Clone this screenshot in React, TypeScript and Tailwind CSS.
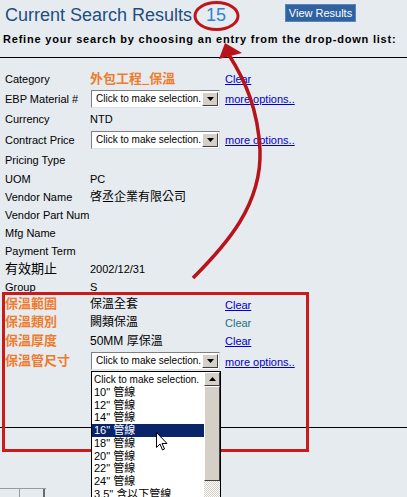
import type { ReactNode } from 'react'

const FONT = "font-['Tahoma','Liberation_Sans','Noto_Sans_CJK_TC',sans-serif]"

type Link = 'clear' | 'clear-visited' | 'more'
type Row = { label: string; cjk?: boolean; value?: ReactNode; select?: boolean; link?: Link; h: string; open?: boolean }

const OPTIONS = ['10" 管線', '12" 管線', '14" 管線', '16" 管線', '18" 管線', '20" 管線', '22" 管線', '24" 管線', '3.5" 含以下管線']

const ROWS: Row[] = [
  { label: 'Category', value: <span className="font-bold text-[13px] text-[#ef7b2c] font-['Noto_Sans_CJK_TC',sans-serif]">外包工程_保溫</span>, link: 'clear', h: 'h-[19px]' },
  { label: 'EBP Material #', select: true, link: 'more', h: 'h-[21px]' },
  { label: 'Currency', value: 'NTD', h: 'h-[20px]' },
  { label: 'Contract Price', select: true, link: 'more', h: 'h-[21px]' },
  { label: 'Pricing Type', h: 'h-[20px]' },
  { label: 'UOM', value: 'PC', h: 'h-[18px]' },
  { label: 'Vendor Name', value: <span className="text-[12px]">啓丞企業有限公司</span>, h: 'h-[18px]' },
  { label: 'Vendor Part Num', h: 'h-[18px]' },
  { label: 'Mfg Name', h: 'h-[18px]' },
  { label: 'Payment Term', h: 'h-[18px]' },
  { label: '有效期止', value: '2002/12/31', h: 'h-[18px]' },
  { label: 'Group', value: 'S', h: 'h-[17px]' },
  { label: '保溫範圍', cjk: true, value: <span className="text-[12px]">保溫全套</span>, link: 'clear', h: 'h-[18px]' },
  { label: '保溫類別', cjk: true, value: <span className="text-[12px]">闕類保溫</span>, link: 'clear-visited', h: 'h-[18px]' },
  { label: '保溫厚度', cjk: true, value: <span className="text-[12px]">50MM 厚保溫</span>, link: 'clear', h: 'h-[19px]' },
  { label: '保溫管尺寸', cjk: true, select: true, open: true, link: 'more', h: 'h-[22px]' },
]

function DownArrow() {
  return (
    <svg width="7" height="4" viewBox="0 0 7 4"><path d="M0 0h7L3.5 4z" fill="#000" /></svg>
  )
}

function DropList() {
  return (
    <div className="absolute left-0 top-[19px] z-10 flex w-[130px] h-[140px] border border-black bg-white">
      <div className="flex-1 pt-[1px]">
        <div className="pl-[2px] text-[10px] leading-[13px] whitespace-nowrap">Click to make selection.</div>
        {OPTIONS.map((o) => (
          <div key={o} className={o.startsWith('16') ? 'pl-[2px] text-[11px] leading-[12.7px] bg-[#0a246a] text-white' : 'pl-[2px] text-[11px] leading-[12.7px]'}>{o}</div>
        ))}
      </div>
      <div className="flex flex-col w-[16px]">
        <div className="flex items-center justify-center h-[14px] bg-[#d4d0c8] border border-t-white border-l-white border-r-[#404040] border-b-[#404040]">
          <svg width="7" height="4" viewBox="0 0 7 4"><path d="M0 4h7L3.5 0z" fill="#000" /></svg>
        </div>
        <div className="h-[95px] bg-[#d4d0c8] border border-t-white border-l-white border-r-[#404040] border-b-[#404040]" />
        <div className="flex-1 bg-[repeating-conic-gradient(#d4d0c8_0_25%,#ffffff_0_50%)] bg-[length:2px_2px]" />
      </div>
      {/* mouse pointer */}
      <svg className="absolute left-[64px] top-[60px]" width="12" height="19" viewBox="0 0 12 19">
        <path d="M0.5 0.5v15l3.5-3.5 2.5 6 2-1-2.5-5.5h5z" fill="#fff" stroke="#000" strokeWidth="1" />
      </svg>
    </div>
  )
}

function Select({ open }: { open?: boolean }) {
  return (
    <div className="relative ml-[1px]">
      <div className="flex w-[129px] h-[18px] border border-t-[#808080] border-l-[#808080] border-r-[#e0e0e0] border-b-[#e0e0e0] bg-white">
        <span className="flex-1 pl-[4px] text-[10px] leading-[16px] whitespace-nowrap overflow-hidden">Click to make selection.</span>
        <span className="flex items-center justify-center w-[16px] my-[1px] mr-[1px] bg-[#d4d0c8] border border-t-white border-l-white border-r-[#404040] border-b-[#404040]">
          <DownArrow />
        </span>
      </div>
      {open && <DropList />}
    </div>
  )
}

function RowLink({ kind }: { kind: Link }) {
  if (kind === 'more') return <span className="text-[11px] text-[#0000cc] underline">more options..</span>
  if (kind === 'clear-visited') return <span className="text-[11px] text-[#1c6f86]">Clear</span>
  return <span className="text-[11px] text-[#0000cc] underline">Clear</span>
}

export default function App() {
  return (
    <div className={`relative w-[407px] h-[497px] overflow-hidden bg-[#e6ebef] text-black ${FONT}`}>
      <header className="flex h-[30px] pt-[4px]">
        <h1 className="w-[285px] pl-[5px] text-[18px] leading-[22px] text-[#1e4e7f] font-['Liberation_Sans',sans-serif]">
          Current Search Results <span className="pl-[9px] text-[#2d84d6]">15</span>
        </h1>
        <button className="h-[18px] w-[71px] bg-[#2f63a0] border border-[#5a86bd] text-white text-[11px] leading-[16px]">View Results</button>
      </header>
      <p className="mt-[2px] pl-[3px] text-[11px] leading-[14px] font-bold tracking-[0.8px] whitespace-nowrap">
        Refine your search by choosing an entry from the drop-down list:
      </p>
      <div className="mt-[11px] border-t border-black" />

      <div className="mt-[11px]">
        {ROWS.map((r) => (
          <div key={r.label} className={`grid grid-cols-[90px_135px_1fr] items-center ${r.h}`}>
            <span className={r.cjk ? 'pl-[5px] text-[13px] leading-[16px] font-bold text-[#ef7b2c]' : r.label === '有效期止' ? 'pl-[5px] text-[13px] leading-[16px]' : 'pl-[5px] text-[11px] leading-[14px]'}>{r.label}</span>
            <div className="text-[11px] leading-[14px]">{r.select ? <Select open={r.open} /> : r.value}</div>
            <div className="leading-[14px]">{r.link && <RowLink kind={r.link} />}</div>
          </div>
        ))}
      </div>

      <div className="mt-[55px] border-t border-black" />

      <div className="mt-[60px] flex w-[46px] h-[10px] border-t border-[#9a9a9a]">
        <div className="w-[20px] border-r border-[#9a9a9a]" />
        <div className="w-[25px] border-r-2 border-[#6a6a6a]" />
      </div>

      {/* annotation overlay */}
      <svg className="absolute left-0 top-0 pointer-events-none" width="407" height="497" viewBox="0 0 407 497">
        <ellipse cx="216.5" cy="16" rx="21.5" ry="13.5" fill="none" stroke="#c0141c" strokeWidth="3" />
        <path d="M193 278C226 245 262 205 260 150C258 110 246 82 229 55" fill="none" stroke="#b8131b" strokeWidth="3.5" />
        <path d="M225 43L219 59L242 53z" fill="#b8131b" />
        <rect x="3.5" y="293.5" width="304" height="157" fill="none" stroke="#cc1a1a" strokeWidth="3" />
      </svg>
    </div>
  )
}
